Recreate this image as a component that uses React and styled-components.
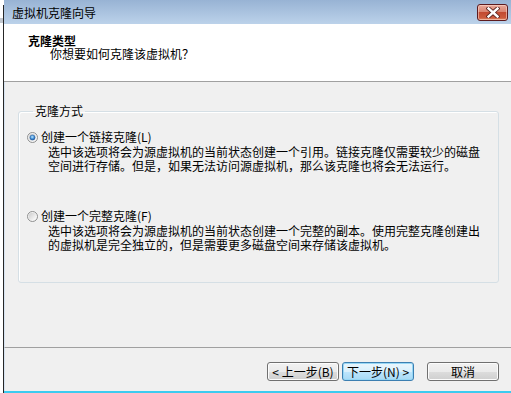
import React from "react";
import styled, { createGlobalStyle } from "styled-components";

const GlobalStyle = createGlobalStyle`
  html, body {
    margin: 0;
    padding: 0;
    background: #ffffff;
  }
  * {
    box-sizing: border-box;
  }
`;

const FONT = `"Noto Sans CJK SC", "Liberation Sans", sans-serif`;

function Radio({ checked }) {
  const bg = checked ? "rbgOn" : "rbgOff";
  return (
    <svg width="11" height="11" viewBox="0 0 11 11">
      <defs>
        <linearGradient id={bg} x1="0" y1="0" x2="1" y2="1">
          <stop offset="0" stopColor="#cbcbcb" />
          <stop offset="1" stopColor="#ffffff" />
        </linearGradient>
        <radialGradient id="dot" cx="0.45" cy="0.4" r="0.65">
          <stop offset="0" stopColor="#c4ebfd" />
          <stop offset="0.5" stopColor="#4a97dc" />
          <stop offset="1" stopColor="#184d98" />
        </radialGradient>
      </defs>
      <circle cx="5.5" cy="5.5" r="5" fill="#f4f4f4" stroke="#8e8f8f" />
      <circle cx="5.5" cy="5.5" r="3.8" fill={`url(#${bg})`} />
      {checked && <circle cx="5.5" cy="5.5" r="2.6" fill="url(#dot)" stroke="#2a5d98" strokeWidth="0.5" />}
    </svg>
  );
}

function CloseGlyph() {
  return (
    <svg width="14" height="11" viewBox="0 0 14 11">
      <path d="M2.5 1.5 L11.5 9.5 M11.5 1.5 L2.5 9.5" stroke="#5a2420" strokeWidth="4.2" strokeLinecap="square" />
      <path d="M2.5 1.5 L11.5 9.5 M11.5 1.5 L2.5 9.5" stroke="#ffffff" strokeWidth="2.4" strokeLinecap="square" />
    </svg>
  );
}

export default function App() {
  return (
    <>
      <GlobalStyle />
      <Screen>
        <LeftEdge>
          <BackBand>
            <span />
          </BackBand>
          <FrameLine />
        </LeftEdge>
        <Window>
          <TitleBar>
            <TitleText>虚拟机克隆向导</TitleText>
            <CloseButton aria-label="关闭">
              <CloseGlyph />
            </CloseButton>
          </TitleBar>
          <Header>
            <HeaderTitle>克隆类型</HeaderTitle>
            <HeaderSub>你想要如何克隆该虚拟机？</HeaderSub>
          </Header>
          <Body>
            <Group>
              <Legend>克隆方式</Legend>
              <Option>
                <RadioRow>
                  <Radio checked />
                  <span>创建一个链接克隆(L)</span>
                </RadioRow>
                <Desc>
                  选中该选项将会为源虚拟机的当前状态创建一个引用。链接克隆仅需要较少的磁盘
                  <br />
                  空间进行存储。但是，如果无法访问源虚拟机，那么该克隆也将会无法运行。
                </Desc>
              </Option>
              <Option $gap>
                <RadioRow>
                  <Radio />
                  <span>创建一个完整克隆(F)</span>
                </RadioRow>
                <Desc>
                  选中该选项将会为源虚拟机的当前状态创建一个完整的副本。使用完整克隆创建出
                  <br />
                  的虚拟机是完全独立的，但是需要更多磁盘空间来存储该虚拟机。
                </Desc>
              </Option>
            </Group>
          </Body>
          <Footer>
            <Button>&lt; 上一步(B)</Button>
            <Button $focused>下一步(N) &gt;</Button>
            <Button $spaced>取消</Button>
          </Footer>
          <TaskLine />
        </Window>
      </Screen>
    </>
  );
}

const Screen = styled.div`
  width: 511px;
  height: 393px;
  display: flex;
  overflow: hidden;
  font-family: ${FONT};
  font-size: 12px;
  color: #000;
`;

const LeftEdge = styled.div`
  width: 4px;
  display: flex;
  background: #ffffff;
`;

const BackBand = styled.div`
  width: 3px;
  padding-top: 18px;

  span {
    display: block;
    height: 5px;
    background: #c3c8cf;
  }
`;

const FrameLine = styled.div`
  width: 1px;
  margin-top: 5px;
  background: #262626;
`;

const Window = styled.div`
  flex: 1;
  display: flex;
  flex-direction: column;
`;

const TitleBar = styled.div`
  height: 24px;
  display: flex;
  align-items: center;
  justify-content: space-between;
  padding: 0 3px 0 8px;
  background: linear-gradient(#98b3d4, #bcd2ea);
`;

const TitleText = styled.span`
  line-height: 14px;
  margin-top: 2px;
  color: #000;
`;

const CloseButton = styled.button`
  width: 31px;
  height: 17px;
  margin-top: 1px;
  padding: 0;
  display: flex;
  align-items: center;
  justify-content: center;
  border: 1px solid #5d1b1f;
  border-radius: 3px;
  background: linear-gradient(#e9a99b 0%, #d98470 45%, #c24a31 50%, #cc5b3d 85%, #e08e6c 100%);
  box-shadow: inset 0 0 0 1px rgba(255, 220, 210, 0.55);
`;

const Header = styled.div`
  height: 58px;
  background: #ffffff;
  border-bottom: 1px solid #a0a0a0;
  padding: 10px 0 0 24px;
`;

const HeaderTitle = styled.div`
  font-weight: 700;
  line-height: 14px;
`;

const HeaderSub = styled.div`
  line-height: 14px;
  margin-top: -1px;
  padding-left: 22px;
`;

const Body = styled.div`
  height: 265px;
  background: #f0f0f0;
  border-left: 1px solid #d6e3f1;
  padding: 22px 12px 0 13px;
`;

const Group = styled.fieldset`
  margin: 0;
  padding: 11px 0 30px 8px;
  border: 1px solid #d5dfe5;
  border-radius: 3px;
  box-shadow: inset 1px 1px 0 #ffffff;
  min-width: 0;
`;

const Legend = styled.legend`
  margin-left: 6px;
  padding: 0 2px;
  line-height: 14px;
`;

const Option = styled.div`
  display: flex;
  flex-direction: column;
  margin-top: ${(p) => (p.$gap ? "35px" : "0")};
`;

const RadioRow = styled.div`
  height: 16px;
  display: flex;
  align-items: center;
  gap: 3px;
  line-height: 14px;

  svg {
    flex: none;
  }
`;

const Desc = styled.div`
  padding-left: 21px;
  line-height: 14px;
  white-space: nowrap;
`;

const Footer = styled.div`
  height: 44px;
  border-top: 1px solid #a0a0a0;
  background: #f0f0f0;
  border-left: 1px solid #d6e3f1;
  display: flex;
  justify-content: flex-end;
  align-items: flex-start;
  padding: 14px 12px 0 0;
  gap: 3px;
`;

const Button = styled.button`
  width: 72px;
  height: 19px;
  padding: 0;
  margin-left: ${(p) => (p.$spaced ? "10px" : "0")};
  font-family: ${FONT};
  font-size: 12px;
  line-height: 14px;
  color: #000;
  border-radius: 3px;
  border: 1px solid ${(p) => (p.$focused ? "#3c7fb1" : "#707070")};
  background: ${(p) =>
    p.$focused
      ? "linear-gradient(#eaf6fd 0%, #d9f0fc 50%, #bee6fd 50%, #a7d9f5 100%)"
      : "linear-gradient(#f2f2f2 0%, #ebebeb 50%, #dddddd 50%, #cfcfcf 100%)"};
  box-shadow: inset 0 0 0 1px ${(p) => (p.$focused ? "#97d7f5" : "#fcfcfc")};
`;

const TaskLine = styled.div`
  height: 2px;
  background: #3ccbef;
`;
